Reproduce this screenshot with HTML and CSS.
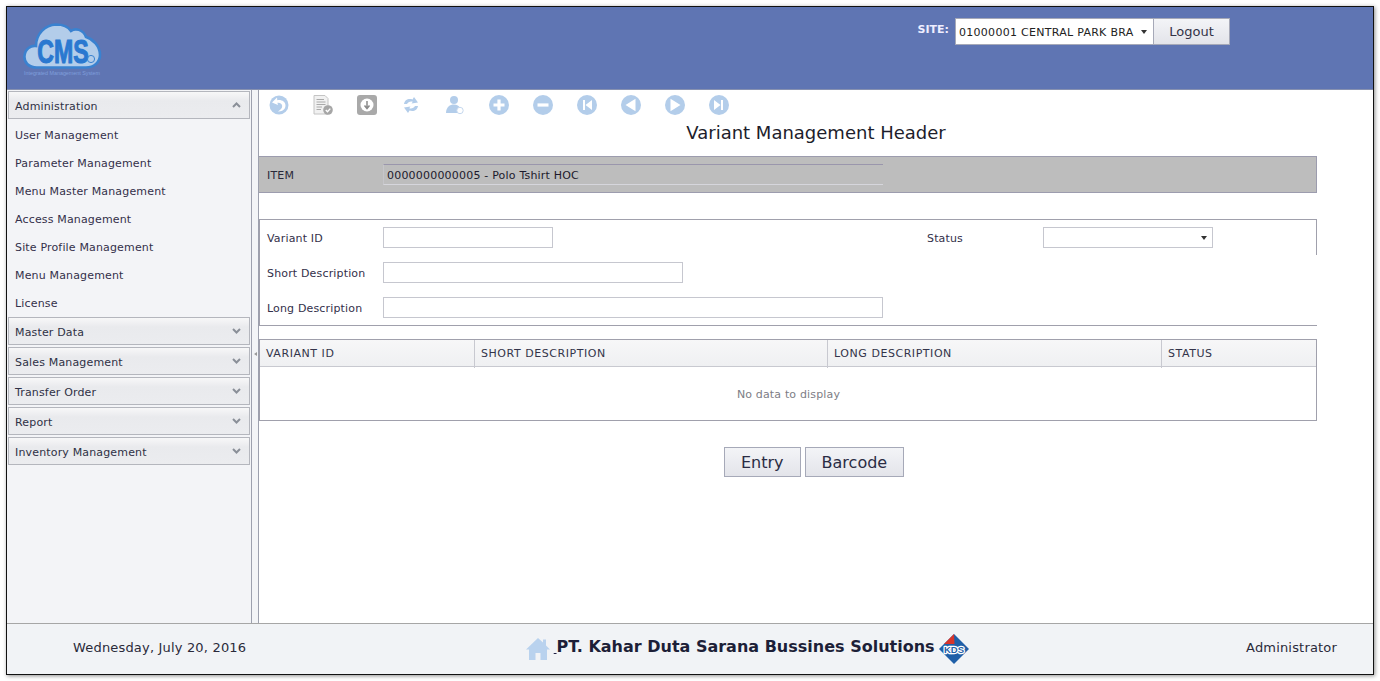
FILE: index.html
```html
<!DOCTYPE html>
<html lang="en">
<head>
<meta charset="utf-8">
<title>Variant Management Header</title>
<link rel="stylesheet" href="styles.css">
</head>
<body>
<div class="window">
  <header class="top">
    <svg class="logo" width="80" height="62" viewBox="0 0 80 62">
      <path d="M14 46.5 C5 46.5 1 41 1.5 35 C2 28 8 24 13 25 C13 13 22 4 33 3.5 C41 3.5 46 7 48 10 C52 7 60 8 63 16 C70 18 77 25 77 34 C77 41 71 46.5 63 46.5 Z" fill="#b3cdea" stroke="#3a82d0" stroke-width="2.6"/>
      <text class="logo-cms" transform="translate(40 42) scale(.7 1)" text-anchor="middle">CMS</text>
      <circle cx="68" cy="38" r="3.6" fill="none" stroke="#3a82d0" stroke-width="1"/>
      <text class="logo-tag" x="39" y="54" text-anchor="middle" textLength="76" lengthAdjust="spacingAndGlyphs">Integrated Management System</text>
    </svg>
    <div class="site">
      <span class="site-label">SITE:</span>
      <div class="site-select"><span class="site-value">01000001 CENTRAL PARK BRA</span><i class="caret"></i></div>
      <button class="logout" type="button">Logout</button>
    </div>
  </header>
  <div class="middle">
    <nav class="side">
      <div class="acc-head"><span>Administration</span><svg class="chev" width="9" height="6" viewBox="0 0 9 6"><path d="M1 5 L4.5 1.5 L8 5" fill="none" stroke="#8a8f98" stroke-width="2"/></svg></div>
      <ul class="menu">
        <li>User Management</li>
        <li>Parameter Management</li>
        <li>Menu Master Management</li>
        <li>Access Management</li>
        <li>Site Profile Management</li>
        <li>Menu Management</li>
        <li>License</li>
      </ul>
      <div class="acc-head"><span>Master Data</span><svg class="chev" width="9" height="6" viewBox="0 0 9 6"><path d="M1 1 L4.5 4.5 L8 1" fill="none" stroke="#8a8f98" stroke-width="2"/></svg></div>
      <div class="acc-head"><span>Sales Management</span><svg class="chev" width="9" height="6" viewBox="0 0 9 6"><path d="M1 1 L4.5 4.5 L8 1" fill="none" stroke="#8a8f98" stroke-width="2"/></svg></div>
      <div class="acc-head"><span>Transfer Order</span><svg class="chev" width="9" height="6" viewBox="0 0 9 6"><path d="M1 1 L4.5 4.5 L8 1" fill="none" stroke="#8a8f98" stroke-width="2"/></svg></div>
      <div class="acc-head"><span>Report</span><svg class="chev" width="9" height="6" viewBox="0 0 9 6"><path d="M1 1 L4.5 4.5 L8 1" fill="none" stroke="#8a8f98" stroke-width="2"/></svg></div>
      <div class="acc-head"><span>Inventory Management</span><svg class="chev" width="9" height="6" viewBox="0 0 9 6"><path d="M1 1 L4.5 4.5 L8 1" fill="none" stroke="#8a8f98" stroke-width="2"/></svg></div>
    </nav>
    <div class="splitter"><i class="split-arrow"></i></div>
    <main class="content">
      <div class="toolbar">
        <svg width="20" height="20" viewBox="0 0 20 20"><circle cx="10" cy="10" r="9.5" fill="#b3cdea"/><path d="M8 2.5 L3 7.5 L9 10 L8.4 7.8 C11 7.4 13.2 8.8 13.2 11 C13.2 13.4 11.4 15 9 16.5 C13 17 16.5 14.4 16.5 10.6 C16.5 6.6 12.6 4.4 8.3 5.2 Z" fill="#fff"/></svg>
        <svg width="20" height="20" viewBox="0 0 20 20"><path d="M1 0.5 H12 L15 3.5 V19 H1 Z" fill="#f1f1f1" stroke="#c4c4c4"/><path d="M3.5 4.5 H11 M3.5 7 H12.5 M3.5 9.5 H12.5 M3.5 12 H9 M3.5 14.5 H8" stroke="#aaa"/><circle cx="15" cy="15" r="4.8" fill="#a6a6a6"/><path d="M12.8 15 L14.5 16.7 L17.3 13.6" fill="none" stroke="#fff" stroke-width="1.4"/></svg>
        <svg width="20" height="20" viewBox="0 0 20 20"><rect width="20" height="20" rx="3" fill="#a9a9a9"/><circle cx="10" cy="10" r="6.5" fill="#fff"/><path d="M10 6 V13 M7.5 10.5 L10 13.5 L12.5 10.5" fill="none" stroke="#8a8a8a" stroke-width="1.5"/></svg>
        <svg width="20" height="20" viewBox="0 0 20 20"><path d="M3 9 C3.5 5 7.5 3 11.5 4.5 L13 2 L17 7.5 L10.5 8.5 L11.8 6.8 C9.5 6 7 7 6 9 Z M17 11 C16.5 15 12.5 17 8.5 15.5 L7 18 L3 12.5 L9.5 11.5 L8.2 13.2 C10.5 14 13 13 14 11 Z" fill="#b3cdea"/></svg>
        <svg width="20" height="20" viewBox="0 0 20 20"><circle cx="9" cy="5" r="4" fill="#b3cdea"/><path d="M1 18 C1 12 5 9.5 9 9.5 C12 9.5 14 11 15 13 L15 18 Z" fill="#b3cdea"/><circle cx="15" cy="15.5" r="3.2" fill="#fff" stroke="#c5d8ee"/></svg>
        <svg width="20" height="20" viewBox="0 0 20 20"><circle cx="10" cy="10" r="10" fill="#b3cdea"/><path d="M10 4.5 V15.5 M4.5 10 H15.5" stroke="#fff" stroke-width="3.2"/></svg>
        <svg width="20" height="20" viewBox="0 0 20 20"><circle cx="10" cy="10" r="10" fill="#b3cdea"/><path d="M4.5 10 H15.5" stroke="#fff" stroke-width="3.2"/></svg>
        <svg width="20" height="20" viewBox="0 0 20 20"><circle cx="10" cy="10" r="10" fill="#b3cdea"/><path d="M6 5 H8 V15 H6 Z M15 5 V15 L8.5 10 Z" fill="#fff"/></svg>
        <svg width="20" height="20" viewBox="0 0 20 20"><circle cx="10" cy="10" r="10" fill="#b3cdea"/><path d="M14.5 3.8 V16.2 L4.5 10 Z" fill="#fff"/></svg>
        <svg width="20" height="20" viewBox="0 0 20 20"><circle cx="10" cy="10" r="10" fill="#b3cdea"/><path d="M5.5 3.8 V16.2 L15.5 10 Z" fill="#fff"/></svg>
        <svg width="20" height="20" viewBox="0 0 20 20"><circle cx="10" cy="10" r="10" fill="#b3cdea"/><path d="M12 5 H14 V15 H12 Z M5 5 V15 L11.5 10 Z" fill="#fff"/></svg>
      </div>
      <h1 class="title">Variant Management Header</h1>
      <div class="item-band">
        <span class="item-label">ITEM</span>
        <div class="item-value">0000000000005 - Polo Tshirt HOC</div>
      </div>
      <section class="form">
        <i class="form-edge"></i>
        <div class="form-row">
          <label class="lbl">Variant ID</label>
          <input class="field w-170" type="text">
          <label class="lbl lbl-status">Status</label>
          <div class="field field-select w-170"><i class="caret"></i></div>
        </div>
        <div class="form-row">
          <label class="lbl">Short Description</label>
          <input class="field w-300" type="text">
        </div>
        <div class="form-row">
          <label class="lbl">Long Description</label>
          <input class="field w-500" type="text">
        </div>
      </section>
      <section class="grid">
        <div class="grid-head">
          <div class="cell">VARIANT ID</div>
          <div class="cell">SHORT DESCRIPTION</div>
          <div class="cell">LONG DESCRIPTION</div>
          <div class="cell">STATUS</div>
        </div>
        <div class="grid-empty">No data to display</div>
      </section>
      <div class="actions">
        <button class="btn" type="button">Entry</button>
        <button class="btn" type="button">Barcode</button>
      </div>
    </main>
  </div>
  <footer class="bottom">
    <span class="date">Wednesday, July 20, 2016</span>
    <div class="company">
      <svg width="24" height="24" viewBox="0 0 24 24"><path d="M12 1 L17 5.5 V2.5 H20 V8.5 L24 12.5 H21 V23 H14.5 V16 H9.5 V23 H3 V12.5 H0 Z" fill="#b9d2ee"/></svg>
      <span class="company-name"><u class="under"> </u>PT. Kahar Duta Sarana Bussines Solutions</span>
      <svg width="30" height="30" viewBox="0 0 30 30"><path d="M15 0 L30 15 L15 30 L0 15 Z" fill="#1f5fa8"/><path d="M15 0 L15.5 10 H5 Z" fill="#d8342b"/><text class="kds" x="15" y="19" text-anchor="middle">KDS</text></svg>
    </div>
    <span class="user">Administrator</span>
  </footer>
</div>
</body>
</html>
```
FILE: styles.css
```css
* { box-sizing: border-box; }
html, body { height: 100%; }
body {
  margin: 0;
  padding: 6px;
  background: #fff;
  font-family: "DejaVu Sans", Verdana, sans-serif;
  font-size: 11px;
  letter-spacing: .16px;
  color: #2a2a3a;
}
.window {
  height: 669px;
  width: 1368px;
  border: 1px solid #111;
  box-shadow: 1px 1px 4px rgba(0,0,0,.45);
  display: flex;
  flex-direction: column;
  background: #fff;
}
.top {
  height: 83px;
  flex: none;
  background: #5f75b3;
  border-bottom: 1px solid #8791b0;
  display: flex;
  justify-content: space-between;
  align-items: flex-start;
  padding: 11px 143px 0 16px;
}
.logo { margin-top: 3px; }
.logo-cms { font: bold 33px "Liberation Sans", sans-serif; letter-spacing: 0; fill: #2a78d0; stroke: #2a78d0; stroke-width: 1.1; }
.logo-tag { font: 5px "Liberation Sans", sans-serif; letter-spacing: 0; fill: #7f9fdc; }
.site { display: flex; align-items: flex-start; }
.site-label { color: #eef; font-weight: bold; font-size: 11px; letter-spacing: 0; margin: 5px 6px 0 0; }
.site-select {
  width: 198px; height: 27px;
  background: #fff;
  border: 1px solid #a6a9b8;
  border-right: 0;
  display: flex; align-items: center;
  padding: 1px 0 0 3px;
  position: relative;
  color: #222;
}
.site-value { white-space: nowrap; letter-spacing: .28px; }
.caret {
  border-left: 3.5px solid transparent;
  border-right: 3.5px solid transparent;
  border-top: 4px solid #333;
  position: absolute; right: 6px; top: 11px;
}
.logout {
  width: 77px; height: 27px;
  border: 1px solid #a6a9b8;
  background: linear-gradient(#f3f4f7, #e3e4ea);
  font: 13px "DejaVu Sans", sans-serif;
  letter-spacing: 0;
  color: #333348;
  padding: 0;
}
.middle { flex: 1; display: flex; min-height: 0; }
.side {
  width: 245px; flex: none;
  background: #f3f4f7;
  border-right: 1px solid #9da0ae;
  padding: 1px 1px 0 1px;
  display: flex; flex-direction: column; gap: 2px;
}
.acc-head {
  height: 28px;
  flex: none;
  border: 1px solid #b4b6bd;
  background: linear-gradient(#f7f7f8, #e9eaed 35%, #ebecef);
  display: flex; align-items: center; justify-content: space-between;
  padding: 2px 8px 0 6px;
  color: #2f3145;
}
.chev { flex: none; margin-top: -3px; }
.menu { list-style: none; margin: 0 0 -2px; padding: 0; }
.menu li {
  height: 28px;
  line-height: 30px;
  padding-left: 7px;
  color: #33304a;
}
.splitter {
  width: 7px; flex: none;
  background: #f3f4f7;
  border-right: 1px solid #9da0ae;
  position: relative;
}
.split-arrow {
  position: absolute; left: 2px; top: 262px;
  border-top: 2.5px solid transparent;
  border-bottom: 2.5px solid transparent;
  border-right: 3px solid #999;
}
.content { flex: 1; width: 0; padding-right: 56px; }
.toolbar {
  display: flex; gap: 24px;
  padding: 5px 0 0 10px;
  height: 25px;
}
.title {
  margin: 0;
  height: 41px;
  padding: 6px 0 0 56px;
  font-size: 18px; font-weight: normal;
  letter-spacing: 0;
  text-align: center;
  color: #1d1d2b;
  line-height: 24px;
}
.item-band {
  height: 37px;
  background: #bdbdbd;
  border-top: 1px solid #9c9cae;
  border-bottom: 1px solid #9c9cae;
  border-right: 1px solid #9c9cae;
  display: flex; align-items: center;
  padding-left: 8px;
}
.item-label { width: 116px; padding-top: 2px; }
.item-value {
  width: 500px; height: 21px;
  border-top: 1px solid #9a96ac;
  border-bottom: 1px solid #d6d6dc;
  border-left: 1px solid #c6c6ca;
  padding-left: 3px;
  line-height: 21px;
  letter-spacing: .2px;
  color: #1c1a2c;
}
.form {
  margin-top: 26px;
  height: 107px;
  border-top: 1px solid #a0a0ac;
  border-left: 1px solid #a0a0ac;
  border-bottom: 1px solid #a0a0ac;
  padding: 7px 0 0 7px;
  display: flex; flex-direction: column; gap: 14px;
  position: relative;
}
.form-edge {
  position: absolute; right: 0; top: 0;
  width: 1px; height: 35px;
  background: #a0a0ac;
}
.form-row { display: flex; align-items: center; height: 21px; }
.lbl { width: 116px; flex: none; color: #33304a; padding-top: 2px; }
.lbl-status { margin-left: 374px; }
.field {
  height: 21px;
  border: 1px solid #c6c7cf;
  background: #fff;
  display: block;
  padding: 0;
  position: relative;
}
.w-170 { width: 170px; }
.w-300 { width: 300px; }
.w-500 { width: 500px; }
.field-select .caret { top: 8px; right: 5px; }
.grid {
  margin-top: 13px;
  height: 82px;
  border: 1px solid #a0a0ac;
}
.grid-head {
  display: grid;
  grid-template-columns: 214px 353px 334px 1fr;
  height: 27px;
  background: linear-gradient(#f7f7f8, #eff0f2);
  border-bottom: 1px solid #c8c9d0;
}
.cell {
  padding-left: 6px;
  line-height: 28px;
  border-left: 1px solid #c8c9d0;
  color: #33344a;
  letter-spacing: .55px;
}
.cell:first-child { border-left: 0; }
.grid-empty { text-align: center; color: #7d7d85; line-height: 56px; padding-left: 1px; }
.actions {
  display: flex; gap: 4px;
  margin: 26px 0 0 465px;
}
.btn {
  height: 30px;
  padding: 0 16px;
  border: 1px solid #a6a9b8;
  background: linear-gradient(#f3f4f7, #e3e4ea);
  font: 16px "DejaVu Sans", sans-serif;
  letter-spacing: 0;
  color: #2a2c44;
}
.bottom {
  height: 51px; flex: none;
  background: #f1f3f6;
  border-top: 1px solid #a6a6a6;
  display: flex; align-items: center; justify-content: space-between;
  padding: 0 36px 3px 66px;
  font-size: 13px;
  letter-spacing: .18px;
  color: #2a2a3a;
}
.company { display: flex; align-items: center; gap: 4px; margin-left: 2px; padding-top: 3px; }
.company-name { font-weight: bold; font-size: 16px; letter-spacing: 0; color: #1d1f38; margin-bottom: 5px; }
.under { color: #224; text-decoration: underline; white-space: pre; font-size: 8px; }
.kds { font: bold 9.5px "Liberation Sans", sans-serif; letter-spacing: 0; fill: #1f5fa8; stroke: #fff; stroke-width: 2.4; paint-order: stroke; stroke-linejoin: round; }
```
